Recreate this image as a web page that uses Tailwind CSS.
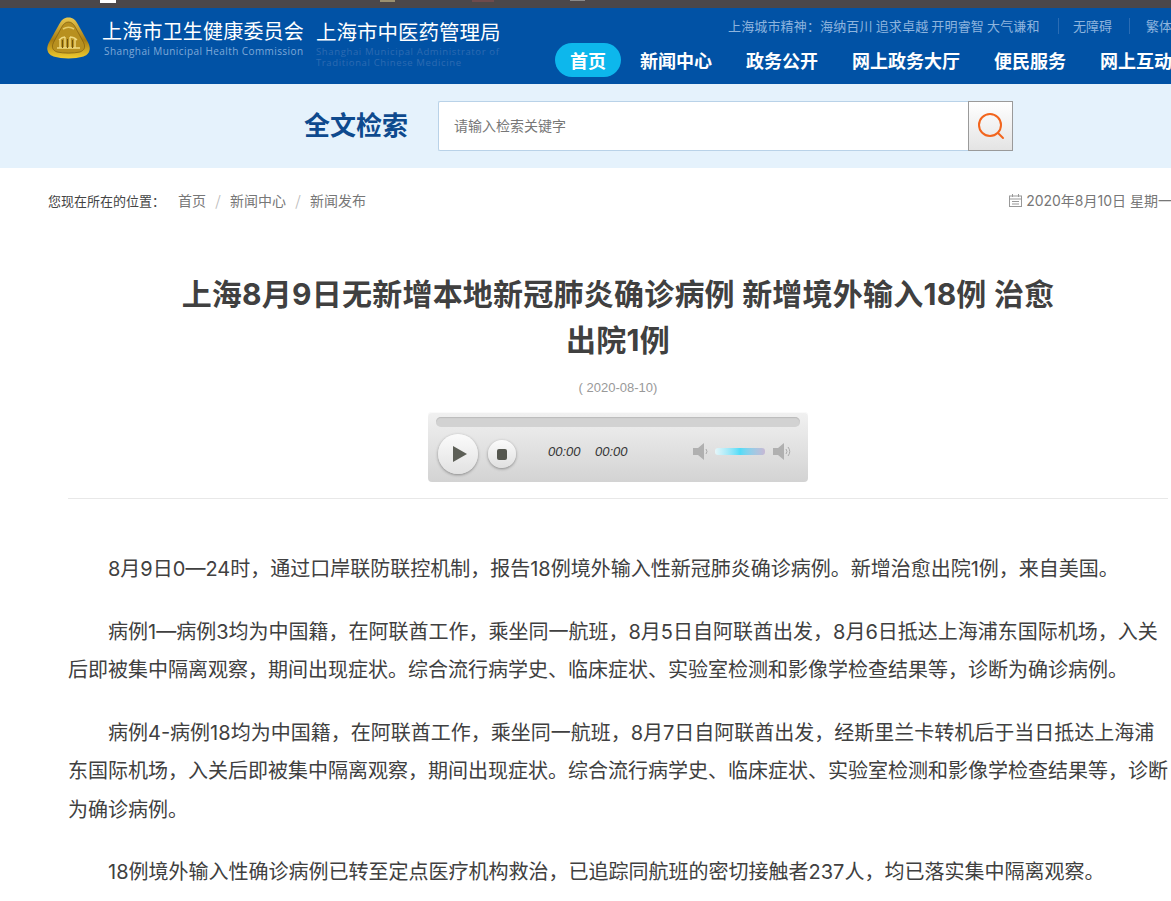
<!DOCTYPE html>
<html lang="zh-CN">
<head>
<meta charset="utf-8">
<title>上海市卫生健康委员会</title>
<script src="https://cdn.jsdelivr.net/npm/@tailwindcss/browser@4"></script>
</head>
<body class="bg-white overflow-hidden font-['Inter','Noto_Sans_CJK_SC',sans-serif]">
<div class="w-[1171px] h-[901px] overflow-hidden">
  <div class="w-[1300px]">
    <div class="relative h-2 bg-[#4b4749]">
      <span class="absolute left-[100px] top-0 w-4 h-[3px] bg-white"></span>
      <span class="absolute left-[380px] top-0 w-[15px] h-[2px] bg-[#9a9070]"></span>
      <span class="absolute left-[472px] top-0 w-[22px] h-[2px] bg-[#6e4a4c]"></span>
      <span class="absolute left-[570px] top-0 w-[15px] h-px bg-[#8a8a8a]"></span>
    </div>
    <header class="h-[76px] bg-[#0152a5] flex pl-[47px]">
      <svg class="w-[43px] h-[42px] mt-[9px] shrink-0" viewBox="0 0 43 42">
        <defs>
          <linearGradient id="g" x1="0" y1="0" x2="0" y2="1">
            <stop offset="0" stop-color="#e8c850"/><stop offset=".55" stop-color="#a87c12"/><stop offset="1" stop-color="#f0cc30"/>
          </linearGradient>
        </defs>
        <path d="M21.500 .5c4.500 0 7 2.500 9.500 7l10 18c3.500 6.500 1.500 12-4.500 14c-9 2.500-21 2.500-30 0c-6-2-8-7.500-4.500-14l10-18c2.500-4.500 5-7 9.500-7z" fill="url(#g)"/>
        <path d="M21.500 5c3 0 5 2 7 5.500l8 15c2.500 5 .5 8-3.500 9.500c-7 1.500-16 1.500-23 0c-4-1.500-6-4.500-3.500-9.500l8-15c2-3.500 4-5.500 7-5.500z" fill="#b8901f" stroke="#7c5c0e" stroke-width=".7"/>
        <path d="M16 12q5.500-3.500 11 0" stroke="#e6cc68" stroke-width="1.500" fill="none"/>
        <path d="M10 31h23M13 22v9M18 20v11M23 20v11M28 22v9M12 23q3-3 6-3M23 20q4 0 7 3" stroke="#f0da80" stroke-width="1.400" fill="none"/>
        <path d="M15.500 23v8M20.500 22v9M25.500 23v8" stroke="#6f520c" stroke-width="1" fill="none"/>
      </svg>
      <div class="w-[437px] ml-[12px] shrink-0 flex font-['Open_Sans','Noto_Sans_CJK_SC']">
        <div class="w-[214px] pt-[9px] shrink-0">
          <div class="text-[20px] leading-[28px] text-white whitespace-nowrap tracking-[.2px] font-['Noto_Sans_CJK_SC']">上海市卫生健康委员会</div>
          <div class="text-[10px] leading-[14px] pl-[2px] -mt-px text-[#7fa9d8] tracking-[.42px] whitespace-nowrap">Shanghai Municipal Health Commission</div>
        </div>
        <div class="w-[200px] pt-[9px] shrink-0">
          <div class="text-[20.500px] leading-[28px] text-white whitespace-nowrap font-['Noto_Sans_CJK_SC']">上海市中医药管理局</div>
          <div class="text-[9.500px] leading-[11px] mt-px text-[#2d6bb2] tracking-[.63px] whitespace-nowrap">Shanghai Municipal Administrator of<br>Traditional Chinese Medicine</div>
        </div>
      </div>
      <div class="flex flex-col ml-[16px]">
        <div class="h-[35px] flex items-center text-[13px] text-[#8db4de] pl-[173px] pt-[1px] whitespace-nowrap font-['Noto_Sans_CJK_SC']">
          <span class="w-[310px] tracking-[.15px]">上海城市精神：海纳百川 追求卓越 开明睿智 大气谦和</span>
          <span class="w-px h-4 bg-[#2a6cb4] ml-[20px]"></span>
          <span class="ml-[14px]">无障碍</span>
          <span class="w-px h-4 bg-[#2a6cb4] ml-[17px]"></span>
          <span class="ml-[16px]">繁体</span>
        </div>
        <nav class="flex gap-1 text-[18px] font-bold text-white whitespace-nowrap font-['Noto_Sans_CJK_SC']">
          <a class="h-[34px] px-[15px] leading-[34px] rounded-[17px] bg-[#0db7ec]">首页</a>
          <a class="h-[34px] px-[15px] leading-[34px]">新闻中心</a>
          <a class="h-[34px] px-[15px] leading-[34px]">政务公开</a>
          <a class="h-[34px] px-[15px] leading-[34px]">网上政务大厅</a>
          <a class="h-[34px] px-[15px] leading-[34px]">便民服务</a>
          <a class="h-[34px] px-[15px] leading-[34px]">网上互动</a>
        </nav>
      </div>
    </header>
    <section class="h-[84px] bg-[#e5f2fc] flex items-center pl-[304px] font-['Noto_Sans_CJK_SC']">
      <div class="w-[134px] text-[26px] leading-[34px] -mt-[4px] font-bold text-[#0e4a8e] whitespace-nowrap">全文检索</div>
      <div class="w-[530px] h-[50px] bg-white border border-[#b9d2e8] border-r-0 rounded-l-[2px] flex items-center pl-[15px] text-[14px] leading-[20px] text-[#777] pb-[2px]">请输入检索关键字</div>
      <div class="w-[45px] h-[50px] border border-[#9a9a9a] bg-gradient-to-b from-white to-[#e4e4e4] flex items-center justify-center">
        <svg class="w-7 h-7" viewBox="0 0 28 28" fill="none" stroke="#f2651d" stroke-width="2"><circle cx="13" cy="13" r="11"/><path d="M21 21l5 5" stroke-linecap="round"/></svg>
      </div>
    </section>
    <main class="pl-[48px]">
      <div class="w-[1124px] h-[66px] flex items-center justify-between text-[14px] leading-[20px] text-[#777] whitespace-nowrap">
        <div class="flex items-center font-['Noto_Sans_CJK_SC'] -mt-px">
          <span class="text-[#444] text-[13px] w-[130px]">您现在所在的位置：</span>
          <span class="pb-[2px]">首页</span><span class="w-[24px] text-center text-[#bbb] pb-[2px]">/</span>
          <span class="pb-[2px]">新闻中心</span><span class="w-[24px] text-center text-[#bbb] pb-[2px]">/</span>
          <span class="pb-[2px]">新闻发布</span>
        </div>
        <div class="flex items-center gap-1 -mt-px">
          <svg class="w-[13px] h-[13px]" viewBox="0 0 13 13" fill="none" stroke="#999"><rect x=".5" y="2" width="12" height="10.500"/><path d="M.5 5h12M3.500 0v3M9.500 0v3M3 7.500h7M3 10h7"/></svg>
          <span>2020年8月10日 星期一</span>
        </div>
      </div>
      <div class="ml-[20px] w-[1100px]">
        <h1 class="w-[880px] mx-auto mt-[37px] text-center text-[30px] leading-[46px] font-bold tracking-[.22px] text-[#404040]">上海8月9日无新增本地新冠肺炎确诊病例 新增境外输入18例 治愈出院1例</h1>
        <div class="mt-[15px] text-center text-[13px] leading-[20px] text-[#999] font-['Liberation_Sans']">( 2020-08-10)</div>
        <div class="relative mx-auto mt-[14px] w-[380px] h-[70px] rounded-[4px] bg-gradient-to-b from-[#f1f1f1] to-[#d3d3d3] shadow-[inset_0_1px_0_#fafafa]">
          <div class="absolute left-2 right-2 top-[5px] h-[10px] rounded-[5px] bg-[#d2d2d2] shadow-[inset_0_1px_1px_#bbb]"></div>
          <div class="absolute left-[10px] top-[22px] w-10 h-10 rounded-full bg-gradient-to-b from-[#fbfbfb] to-[#e2e2e2] shadow-[0_1px_3px_#888] flex items-center justify-center">
            <svg class="w-[14px] h-[16px] ml-[3px]" viewBox="0 0 14 16"><path d="M0 0l14 8-14 8z" fill="#5d5f57"/></svg>
          </div>
          <div class="absolute left-[60px] top-[28px] w-[28px] h-[28px] rounded-full bg-gradient-to-b from-[#fbfbfb] to-[#e0e0e0] shadow-[0_1px_3px_#888] flex items-center justify-center">
            <span class="w-[10px] h-[11px] rounded-[2px] bg-[#55574f]"></span>
          </div>
          <div class="absolute left-[120px] top-[30px] text-[13px] leading-[20px] italic text-[#333] font-['Liberation_Sans'] flex gap-[14.500px]"><span>00:00</span><span>00:00</span></div>
          <svg class="absolute left-[264px] top-[31px] w-[18px] h-[17px]" viewBox="0 0 18 17" fill="none"><path d="M1 5h5l6-5v17l-6-5H1z" fill="#b0b0b0"/><path d="M14 6q2 2.500 0 5" stroke="#aaa"/></svg>
          <div class="absolute left-[287px] top-[36px] w-[50px] h-[7px] rounded-[3px] bg-gradient-to-r from-[#e6f6f9] via-[#4fdcf7] to-[#c6b8d4]"></div>
          <svg class="absolute left-[344px] top-[31px] w-[20px] h-[17px]" viewBox="0 0 20 17" fill="none"><path d="M1 5h5l6-5v17l-6-5H1z" fill="#b0b0b0"/><path d="M14 6q2 2.500 0 5M16 4q3.500 4.500 0 9" stroke="#aaa"/></svg>
        </div>
        <div class="mt-[16px] border-t border-[#e8e8e8] pt-[51px] text-[20px] leading-[38.400px] text-[#404040]">
          <p class="indent-[40px] mb-[24.300px]">8月9日0—24时，通过口岸联防联控机制，报告18例境外输入性新冠肺炎确诊病例。新增治愈出院1例，来自美国。</p>
          <p class="indent-[40px] mb-[24.300px]">病例1—病例3均为中国籍，在阿联酋工作，乘坐同一航班，8月5日自阿联酋出发，8月6日抵达上海浦东国际机场，入关后即被集中隔离观察，期间出现症状。综合流行病学史、临床症状、实验室检测和影像学检查结果等，诊断为确诊病例。</p>
          <p class="indent-[40px] mb-[24.300px]">病例4-病例18均为中国籍，在阿联酋工作，乘坐同一航班，8月7日自阿联酋出发，经斯里兰卡转机后于当日抵达上海浦东国际机场，入关后即被集中隔离观察，期间出现症状。综合流行病学史、临床症状、实验室检测和影像学检查结果等，诊断为确诊病例。</p>
          <p class="indent-[40px] mb-[24.300px]">18例境外输入性确诊病例已转至定点医疗机构救治，已追踪同航班的密切接触者237人，均已落实集中隔离观察。</p>
        </div>
      </div>
    </main>
  </div>
</div>
</body>
</html>
